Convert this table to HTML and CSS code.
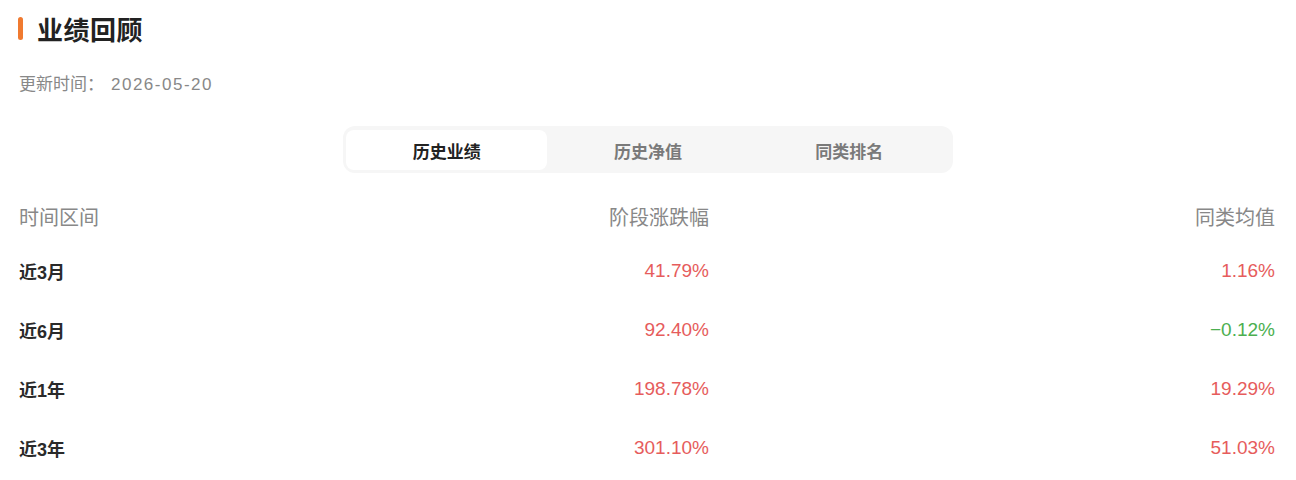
FILE: index.html
```html
<!DOCTYPE html>
<html lang="zh-CN">
<head>
<meta charset="utf-8">
<title>业绩回顾</title>
<link rel="stylesheet" href="styles.css">
</head>
<body>
<div class="page">
  <h1 class="title"><span class="bar"></span>业绩回顾</h1>
  <div class="update"><span class="update-label">更新时间：</span><span class="update-date">2026-05-20</span></div>
  <div class="tabs-wrap">
    <div class="tabs">
      <div class="tab active">历史业绩</div>
      <div class="tab">历史净值</div>
      <div class="tab">同类排名</div>
    </div>
  </div>
  <div class="table">
    <div class="row head">
      <div class="c1">时间区间</div>
      <div class="c2">阶段涨跌幅</div>
      <div class="c3">同类均值</div>
    </div>
    <div class="row">
      <div class="c1 label">近3月</div>
      <div class="c2 up">41.79%</div>
      <div class="c3 up">1.16%</div>
    </div>
    <div class="row">
      <div class="c1 label">近6月</div>
      <div class="c2 up">92.40%</div>
      <div class="c3 down">−0.12%</div>
    </div>
    <div class="row">
      <div class="c1 label">近1年</div>
      <div class="c2 up">198.78%</div>
      <div class="c3 up">19.29%</div>
    </div>
    <div class="row">
      <div class="c1 label">近3年</div>
      <div class="c2 up">301.10%</div>
      <div class="c3 up">51.03%</div>
    </div>
  </div>
</div>
</body>
</html>
```
FILE: styles.css
```css
html, body {
  margin: 0;
  padding: 0;
  background: #ffffff;
}
body {
  font-family: "Liberation Sans", "Noto Sans CJK SC", sans-serif;
  color: #222222;
}
.page {
  padding: 0 21px 0 19px;
}
.title {
  margin: 0;
  height: 56px;
  display: flex;
  align-items: center;
  font-size: 26px;
  font-weight: 700;
  color: #222222;
  letter-spacing: 0.5px;
}
.bar {
  display: block;
  width: 5px;
  height: 23px;
  border-radius: 3px;
  background: #f07a30;
  margin-left: -1px;
  margin-right: 14px;
}
.update {
  margin-top: 17px;
  line-height: 24px;
  font-size: 17px;
  color: #888888;
  display: flex;
}
.update-label {
  width: 92px;
}
.update-date {
  letter-spacing: 1.5px;
}
.tabs-wrap {
  margin-top: 29px;
  display: flex;
  justify-content: center;
  margin-left: -19px;
  margin-right: -21px;
}
.tabs {
  width: 610px;
  height: 47px;
  box-sizing: border-box;
  padding: 4px 3px 3px;
  background: #f6f6f6;
  border-radius: 12px;
  display: flex;
}
.tab {
  flex: 1;
  display: flex;
  align-items: center;
  justify-content: center;
  font-size: 17px;
  font-weight: 700;
  color: #7a7a7a;
  border-radius: 8px;
}
.tab.active {
  background: #ffffff;
  color: #222222;
}
.table {
  margin-top: 28px;
}
.row {
  display: grid;
  grid-template-columns: 124px 1fr 1fr;
  height: 59px;
  align-items: center;
  font-size: 19px;
}
.row.head {
  height: 30px;
  margin-bottom: 10px;
  font-size: 20px;
  color: #888888;
}
.c2, .c3 {
  text-align: right;
}
.label {
  font-size: 18px;
  font-weight: 700;
  color: #2a2a2a;
}
.up {
  color: #e65c5c;
}
.down {
  color: #4caf50;
}
```
